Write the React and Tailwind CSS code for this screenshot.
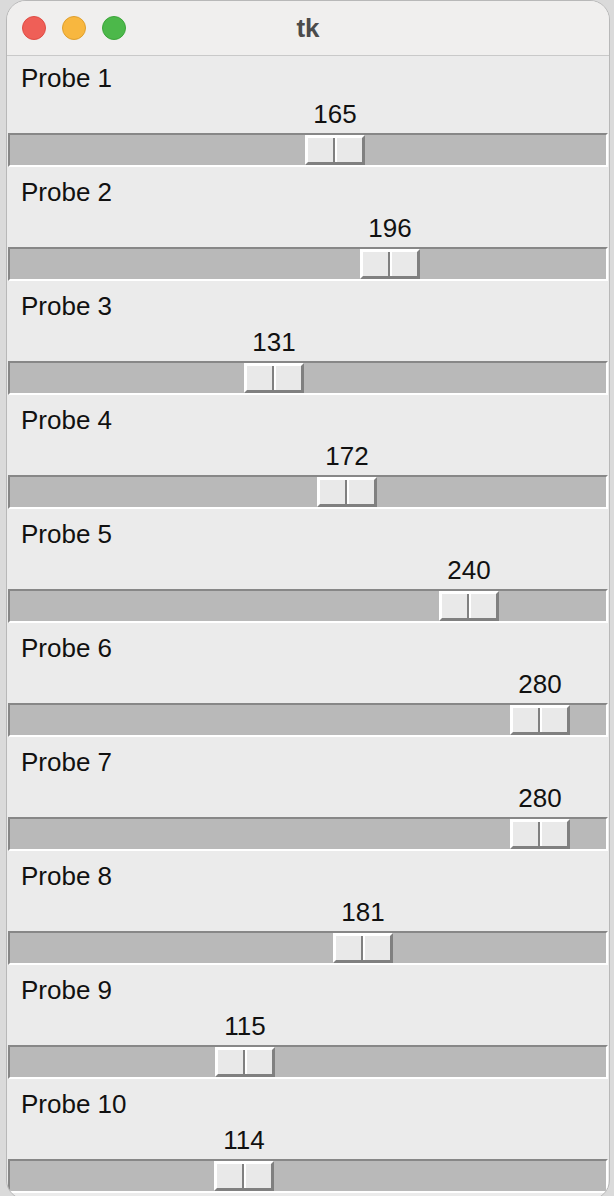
import React from "react";

const probes = [165, 196, 131, 172, 240, 280, 280, 181, 115, 114];

const MAX = 300;
const TRAVEL = 536; // inner trough width (596) minus thumb width (60)

const Scale = ({ label, value }) => {
  const left = Math.round((value / MAX) * TRAVEL);

  return (
    <div className="mb-[10px]">
      <div className="h-[30px] pl-[14px] text-[26px] leading-[30px] text-[#111]">{label}</div>

      {/* value shown above the thumb */}
      <div className="relative mx-[1px] mt-[6px] h-[30px]">
        <span
          className="absolute top-0 w-[60px] text-center text-[26px] leading-[30px] text-[#111]"
          style={{ left: left + 2 }}
        >
          {value}
        </span>
      </div>

      {/* trough */}
      <div className="relative mx-[1px] mt-[4px] h-[34px] border-2 border-t-[#878787] border-l-[#878787] border-b-white border-r-white bg-[#b9b9b9]">
        <div
          className="absolute top-0 flex h-[30px] w-[60px] border-t-[3px] border-l-[3px] border-b-[3px] border-r-[3px] border-t-white border-l-white border-b-[#808080] border-r-[#808080] bg-[#e9e9e9]"
          style={{ left }}
        >
          <div className="flex-1 border-r-2 border-r-[#808080]" />
          <div className="flex-1 border-l-2 border-l-white" />
        </div>
      </div>
    </div>
  );
};

export default function App() {
  return (
    <div
      className="h-[1196px] w-[614px] overflow-hidden bg-[#dadada]"
      style={{ fontFamily: '"Liberation Sans", Arial, sans-serif' }}
    >
      <div className="ml-[6px] h-[1200px] w-[604px] overflow-hidden rounded-[20px] border border-[#b8b8b8] bg-[#ebebeb]">
        {/* title bar */}
        <div className="relative flex h-[55px] items-center justify-center border-b border-[#c9c9c9] bg-[#f0efee]">
          <div className="absolute left-[15px] top-[15px] flex gap-[16px]">
            <span className="h-[24px] w-[24px] rounded-full border border-[#de4d45] bg-[#ef5f57]" />
            <span className="h-[24px] w-[24px] rounded-full border border-[#de9f2e] bg-[#f8b73f]" />
            <span className="h-[24px] w-[24px] rounded-full border border-[#3ca53a] bg-[#4cb84a]" />
          </div>
          <span className="text-[26px] font-bold leading-[30px] text-[#4b4b4b]">tk</span>
        </div>

        {/* scales */}
        <div className="pt-[7px]">
          {probes.map((v, i) => (
            <Scale key={i} label={`Probe ${i + 1}`} value={v} />
          ))}
        </div>
      </div>
    </div>
  );
}
